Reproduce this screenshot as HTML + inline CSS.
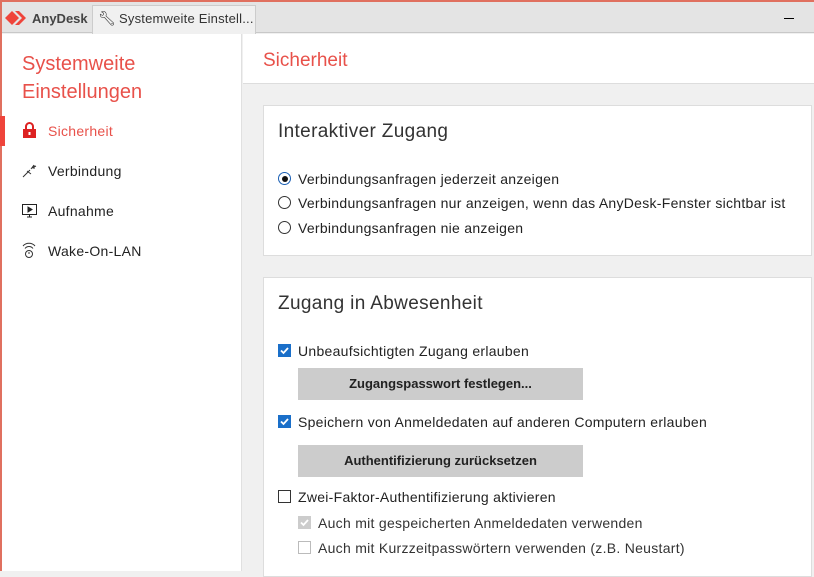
<!DOCTYPE html>
<html><head><meta charset="utf-8"><style>
*{margin:0;padding:0;box-sizing:border-box}
body{width:814px;height:571px;overflow:hidden;background:#f0f0f0;font-family:"Liberation Sans",sans-serif;color:#222;position:relative}
.a{position:absolute;white-space:nowrap}
.t{font-size:14px;letter-spacing:0.28px}
.rb{position:absolute;width:13px;height:13px;border:1px solid #333;border-radius:50%}
.cb{position:absolute;width:13px;height:13px;border:1px solid #333;background:#fff}
.cb.on{background:#1a6fc9;border-color:#1a6fc9}
.btn{position:absolute;left:298px;width:285px;height:32px;background:#cccccc;font-size:13px;font-weight:bold;text-align:center;line-height:32px;color:#222}
</style></head><body>
<div class="a" style="left:0;top:0;width:814px;height:2px;background:#e0705f"></div>
<div class="a" style="left:0;top:2px;width:814px;height:31px;background:#e4e4e4;border-bottom:1px solid #c8c8c8"></div>
<svg class="a" style="left:5px;top:10px" width="24" height="16" viewBox="0 0 24 16"><path d="M0 8 L7 1 L14 8 L7 15Z" fill="#ef443b"/><path d="M10 1 L14 1 L21 8 L14 15 L10 15 L17 8Z" fill="#ef443b"/></svg>
<div class="a" style="left:32px;top:11px;font-size:13px;font-weight:bold;color:#444">AnyDesk</div>
<div class="a" style="left:92px;top:5px;width:164px;height:29px;background:#f0f0f0;border:1px solid #ccc;border-bottom:none"></div>
<div class="a" style="left:98px;top:10px;font-size:14px;color:#333">&#x1F527;&#xFE0E;</div>
<div class="a" style="left:119px;top:11px;font-size:13px;color:#333;letter-spacing:0.2px">Systemweite Einstell...</div>
<div class="a" style="left:784px;top:18px;width:10px;height:1px;background:#000"></div>
<div class="a" style="left:0;top:34px;width:242px;height:537px;background:#fff;border-right:1px solid #e0e0e0"></div>
<div class="a" style="left:0;top:0;width:2px;height:571px;background:#e0705f"></div>
<div class="a" style="left:22px;top:50px;font-size:20px;line-height:28px;color:#e8514a">Systemweite<br>Einstellungen</div>
<div class="a" style="left:0;top:116px;width:5px;height:30px;background:#ef443b"></div>
<svg class="a" style="left:23px;top:122px" width="13" height="16" viewBox="0 0 13 16"><path d="M3 7V4.5a3.5 3.5 0 0 1 7 0V7" stroke="#d22" stroke-width="2" fill="none"/><rect x="0" y="7" width="13" height="9" fill="#d22"/><rect x="5.5" y="10" width="2" height="3" fill="#fff"/></svg>
<div class="a t" style="left:48px;top:123px;color:#e8514a">Sicherheit</div>
<svg class="a" style="left:22px;top:163px" width="16" height="15" viewBox="0 0 16 15" stroke="#333" fill="none"><path d="M1 14L8 7M5 8l4 3M9 6l3-4M10 5l4-2M12 2v4"/></svg>
<div class="a t" style="left:48px;top:163px">Verbindung</div>
<svg class="a" style="left:22px;top:204px" width="15" height="14" viewBox="0 0 15 14" stroke="#222" fill="none"><rect x="0.5" y="0.5" width="14" height="10"/><path d="M5 13h5M7.5 10.5v2.5" /><path d="M6 3l4 2.5L6 8Z" fill="#222"/></svg>
<div class="a t" style="left:48px;top:203px">Aufnahme</div>
<svg class="a" style="left:22px;top:242px" width="14" height="16" viewBox="0 0 14 16" stroke="#333" fill="none"><path d="M1 4a8 8 0 0 1 12 0M3 6.5a5 5 0 0 1 8 0"/><circle cx="7" cy="12" r="3.5"/><path d="M7 10v2"/></svg>
<div class="a t" style="left:48px;top:243px">Wake-On-LAN</div>
<div class="a" style="left:243px;top:34px;width:571px;height:50px;background:#fff;border-bottom:1px solid #ddd"></div>
<div class="a" style="left:263px;top:50px;font-size:19px;color:#e8514a">Sicherheit</div>
<div class="a" style="left:263px;top:105px;width:549px;height:151px;background:#fff;border:1px solid #ddd"></div>
<div class="a" style="left:278px;top:121px;font-size:19px;color:#333;letter-spacing:0.35px">Interaktiver Zugang</div>
<div class="rb" style="left:278px;top:172px;border-color:#1a5fb4"><div style="margin:2.5px;width:6px;height:6px;border-radius:50%;background:#111"></div></div>
<div class="a t" style="left:298px;top:171px">Verbindungsanfragen jederzeit anzeigen</div>
<div class="rb" style="left:278px;top:196px"></div>
<div class="a t" style="left:298px;top:195px">Verbindungsanfragen nur anzeigen, wenn das AnyDesk-Fenster sichtbar ist</div>
<div class="rb" style="left:278px;top:221px"></div>
<div class="a t" style="left:298px;top:220px">Verbindungsanfragen nie anzeigen</div>
<div class="a" style="left:263px;top:277px;width:549px;height:300px;background:#fff;border:1px solid #ddd"></div>
<div class="a" style="left:278px;top:293px;font-size:19px;color:#333;letter-spacing:0.35px">Zugang in Abwesenheit</div>
<div class="cb on" style="left:278px;top:344px"><svg width="11" height="11" viewBox="0 0 11 11" style="display:block"><path d="M2 5.5l2.5 2.5L9 3" stroke="#fff" stroke-width="1.8" fill="none"/></svg></div>
<div class="a t" style="left:298px;top:343px">Unbeaufsichtigten Zugang erlauben</div>
<div class="btn" style="top:368px">Zugangspasswort festlegen...</div>
<div class="cb on" style="left:278px;top:415px"><svg width="11" height="11" viewBox="0 0 11 11" style="display:block"><path d="M2 5.5l2.5 2.5L9 3" stroke="#fff" stroke-width="1.8" fill="none"/></svg></div>
<div class="a t" style="left:298px;top:414px">Speichern von Anmeldedaten auf anderen Computern erlauben</div>
<div class="btn" style="top:445px">Authentifizierung zurücksetzen</div>
<div class="cb" style="left:278px;top:490px"></div>
<div class="a t" style="left:298px;top:489px">Zwei-Faktor-Authentifizierung aktivieren</div>
<div class="cb" style="left:298px;top:516px;background:#ccc;border-color:#ccc"><svg width="11" height="11" viewBox="0 0 11 11" style="display:block"><path d="M2 5.5l2.5 2.5L9 3" stroke="#fff" stroke-width="1.8" fill="none"/></svg></div>
<div class="a t" style="left:318px;top:515px;color:#333">Auch mit gespeicherten Anmeldedaten verwenden</div>
<div class="cb" style="left:298px;top:541px;border-color:#bbb"></div>
<div class="a t" style="left:318px;top:540px;color:#333">Auch mit Kurzzeitpasswörtern verwenden (z.B. Neustart)</div>
</body></html>
